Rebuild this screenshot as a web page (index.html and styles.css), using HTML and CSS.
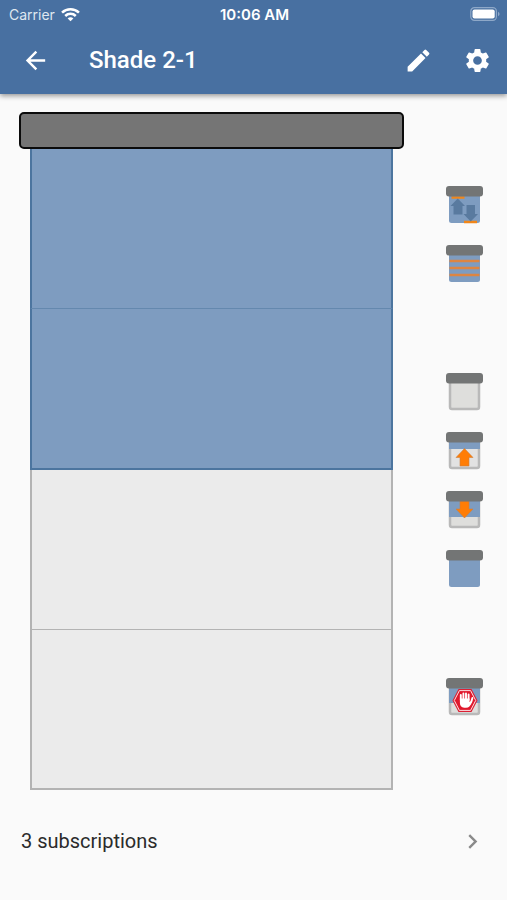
FILE: index.html
```html
<!DOCTYPE html>
<html lang="en">
<head>
<meta charset="utf-8">
<meta name="viewport" content="width=device-width, initial-scale=1">
<title>Shade 2-1</title>
<link rel="stylesheet" href="styles.css">
</head>
<body>
<header class="top">
  <div class="status">
    <div class="carrier">
      <span>Carrier</span>
      <svg width="19" height="15" viewBox="0 0 18 14" fill="none" stroke="#fff" stroke-width="2.4" aria-hidden="true">
        <path d="M1 5.2a11.5 11.5 0 0 1 16 0M4 8.4a7.2 7.2 0 0 1 10 0"/>
        <path d="M9 13.5 6.3 10.8a3.8 3.8 0 0 1 5.4 0z" fill="#fff" stroke="none"/>
      </svg>
    </div>
    <time class="clock">10:06 AM</time>
    <svg class="battery" width="30" height="14" viewBox="0 0 30 14" aria-hidden="true">
      <rect x=".8" y=".7" width="25.6" height="12.6" rx="3.6" fill="none" stroke="#8ea8c8" stroke-width="1.2"/>
      <rect x="2.5" y="2.4" width="22.2" height="9.2" rx="2" fill="#fff"/>
      <path d="M28 4.8q1.6.7 1.6 2.2T28 9.2z" fill="#8ea8c8"/>
    </svg>
  </div>
  <div class="bar">
    <button class="icon-btn" aria-label="Back">
      <svg width="29" height="29" viewBox="0 0 24 24" fill="#fff"><path d="M20 11H7.83l5.59-5.59L12 4l-8 8 8 8 1.41-1.41L7.83 13H20v-2z"/></svg>
    </button>
    <h1 class="title">Shade 2-1</h1>
    <button class="icon-btn" aria-label="Edit">
      <svg width="29" height="29" viewBox="0 0 24 24" fill="#fff"><path d="M3 17.25V21h3.75L17.81 9.94l-3.75-3.75L3 17.25zM20.71 7.04a1 1 0 0 0 0-1.41l-2.34-2.34a1 1 0 0 0-1.41 0l-1.83 1.83 3.75 3.75 1.83-1.83z"/></svg>
    </button>
    <button class="icon-btn" aria-label="Settings">
      <svg width="29" height="29" viewBox="0 0 24 24" fill="#fff"><path d="M19.14 12.94c.04-.3.06-.61.06-.94 0-.32-.02-.64-.07-.94l2.03-1.58a.49.49 0 0 0 .12-.61l-1.92-3.32a.49.49 0 0 0-.59-.22l-2.39.96c-.5-.38-1.03-.7-1.62-.94l-.36-2.54a.48.48 0 0 0-.48-.41h-3.84a.47.47 0 0 0-.47.41l-.36 2.54c-.59.24-1.13.57-1.62.94l-2.39-.96a.48.48 0 0 0-.59.22L2.74 8.87a.47.47 0 0 0 .12.61l2.03 1.58c-.05.3-.09.63-.09.94s.02.64.07.94l-2.03 1.58a.49.49 0 0 0-.12.61l1.92 3.32c.12.22.37.29.59.22l2.39-.96c.5.38 1.03.7 1.62.94l.36 2.54c.05.24.24.41.48.41h3.84c.24 0 .44-.17.47-.41l.36-2.54c.59-.24 1.13-.56 1.62-.94l2.39.96c.22.08.47 0 .59-.22l1.92-3.32a.47.47 0 0 0-.12-.61l-2.01-1.58zM12 15.6a3.6 3.6 0 1 1 0-7.2 3.6 3.6 0 0 1 0 7.2z"/></svg>
    </button>
  </div>
</header>

<main class="content">
  <section class="shade" aria-label="Shade position">
    <div class="rail"></div>
    <div class="window">
      <div class="pane covered"></div>
      <div class="pane covered last"></div>
      <div class="pane open"></div>
      <div class="pane open last"></div>
    </div>
  </section>

  <nav class="controls" aria-label="Shade controls">
    <div class="group">
      <button class="control" aria-label="Set limits">
        <svg viewBox="0 0 38 38">
          <rect x="3" y="5" width="31" height="32" rx="2.5" fill="#7e9cc0"/>
          <path d="M5.500 11.500h13M18 36h13" stroke="#f0861a" stroke-width="2.6"/>
          <path d="M11.700 12.500l7.300 7.500H16.500v8.500h-9V20H4.500z M24.700 35.500l-7.200-7.500h3v-9h8.500v9h3z" fill="#597a9f"/>
          <rect width="37" height="10.500" rx="3" fill="#737575"/>
        </svg>
      </button>
      <button class="control" aria-label="Presets">
        <svg viewBox="0 0 38 38">
          <rect x="3" y="5" width="31" height="32" rx="2.5" fill="#7e9cc0"/>
          <path d="M3.500 16h30M3.500 23h30M3.500 30h30" stroke="#dd8541" stroke-width="2.4"/>
          <rect width="37" height="10.500" rx="3" fill="#737575"/>
        </svg>
      </button>
    </div>
    <div class="group">
      <button class="control" aria-label="Open fully">
        <svg viewBox="0 0 38 38">
          <rect x="4" y="5" width="29" height="31" rx="2" fill="#dededc" stroke="#b9b9b9" stroke-width="2.5"/>
          <rect width="37" height="10.500" rx="3" fill="#737575"/>
        </svg>
      </button>
      <button class="control" aria-label="Raise">
        <svg viewBox="0 0 38 38">
          <rect x="4" y="5" width="29" height="31" rx="2" fill="#e2e2e2" stroke="#b9b9b9" stroke-width="2.5"/>
          <path d="M3 8h31v9H3z" fill="#7e9cc0"/>
          <path d="M18.500 16.500l8.500 9h-4V34h-9v-8.500h-4z" fill="#ff7d05" stroke="#c98243" stroke-width=".6"/>
          <rect width="37" height="10.500" rx="3" fill="#737575"/>
        </svg>
      </button>
      <button class="control" aria-label="Lower">
        <svg viewBox="0 0 38 38">
          <rect x="4" y="5" width="29" height="31" rx="2" fill="#dededc" stroke="#b9b9b9" stroke-width="2.5"/>
          <path d="M3 8h31v18H3z" fill="#7e9cc0"/>
          <path d="M18.500 27l-8.500-9h4v-8h9v8h4z" fill="#ff7d05" stroke="#c98243" stroke-width=".6"/>
          <rect width="37" height="10.500" rx="3" fill="#737575"/>
        </svg>
      </button>
      <button class="control" aria-label="Close fully">
        <svg viewBox="0 0 38 38">
          <rect x="3" y="5" width="31" height="32" rx="2.5" fill="#7e9cc0"/>
          <rect width="37" height="10.500" rx="3" fill="#737575"/>
        </svg>
      </button>
    </div>
    <div class="group">
      <button class="control" aria-label="Stop">
        <svg viewBox="0 0 38 38">
          <rect x="4" y="5" width="29" height="31" rx="2" fill="#dededc" stroke="#b9b9b9" stroke-width="2.5"/>
          <path d="M3 8h31v17H3z" fill="#7e9cc0"/>
          <rect width="37" height="10.500" rx="3" fill="#737575"/>
          <path d="M12.500 11h13l6 11.500-6 11.500h-13l-6-11.500z" fill="#dc2034"/>
          <path d="M13.400 12.600h11.200l5.100 9.900-5.100 9.900H13.400l-5.100-9.900z" fill="#e0182c" stroke="#fbdfe2" stroke-width="1"/>
          <path d="M14.800 22v-5M17.400 22v-6.500M20 22v-6.500M22.600 22v-5.500M25.200 24l1.200-4" fill="none" stroke="#fff" stroke-width="1.900" stroke-linecap="round"/>
          <path d="M13.900 20.500h9.600v3.500l2.900-1.500q-.8 4-3 6-1.200 1.200-3.400 1.200h-1.800q-4.300-.7-4.300-5z" fill="#fff"/>
        </svg>
      </button>
    </div>
  </nav>
</main>

<a class="subscriptions" href="#subscriptions">
  <span>3 subscriptions</span>
  <svg width="29" height="29" viewBox="0 0 24 24" fill="#8a8a8a" aria-hidden="true"><path d="M10 6 8.590 7.410 13.170 12l-4.580 4.590L10 18l6-6z"/></svg>
</a>
</body>
</html>
```

FILE: styles.css
```css
* {
  box-sizing: border-box;
}

body {
  margin: 0;
  min-height: 100vh;
  display: flex;
  flex-direction: column;
  padding-bottom: 26px;
  background: #fafafa;
  color: #2b2b2b;
  font-family: Roboto, "Liberation Sans", sans-serif;
}

button {
  padding: 0;
  border: 0;
  background: none;
  cursor: pointer;
}

svg {
  display: block;
}

.top {
  background: #4870a1;
  color: #fff;
  box-shadow: 0 2px 5px rgba(0, 0, 0, 0.4);
}

.status {
  display: grid;
  grid-template-columns: 1fr auto 1fr;
  align-items: center;
  height: 28px;
  padding: 0 7px 0 9px;
  font-family: Inter, sans-serif;
  font-size: 14px;
}

.carrier {
  display: flex;
  align-items: center;
  gap: 6px;
  color: #dfe7f0;
}

.clock {
  font-size: 15px;
  font-weight: 600;
}

.battery {
  justify-self: end;
}

.bar {
  display: flex;
  align-items: center;
  height: 66px;
  padding: 0 6px 2px 11px;
}

.icon-btn {
  display: grid;
  place-items: center;
  width: 48px;
  height: 48px;
}

.icon-btn + .icon-btn {
  margin-left: 11px;
}

.title {
  flex: 1;
  margin: 0 0 0 30px;
  font-size: 24px;
  font-weight: 500;
}

.content {
  flex: 1;
  display: flex;
  padding: 18px 23px 18px 19px;
}

.shade {
  flex: 1;
  display: flex;
  flex-direction: column;
}

.rail {
  height: 37px;
  border: 2px solid #0b0b0b;
  border-radius: 5px;
  background: #757575;
}

.window {
  flex: 1;
  display: grid;
  grid-template-rows: repeat(4, 1fr);
  min-height: 400px;
  margin: 0 11px;
}

.pane {
  border: 2px solid #b3b3b3;
  border-top: 0;
  border-bottom-width: 1px;
}

.covered {
  border-color: #4c759f;
  border-bottom-color: #6488ae;
  background: #7e9cc0;
}

.open {
  background: #ebebeb;
}

.last {
  border-bottom-width: 2px;
}

.covered.last {
  border-bottom-color: #4c759f;
}

.controls {
  display: flex;
  flex-direction: column;
  justify-content: center;
  gap: 90px;
  width: 38px;
  margin-left: 42px;
}

.group {
  display: grid;
  gap: 21px;
}

.control,
.control svg {
  width: 38px;
  height: 38px;
}

.subscriptions {
  display: flex;
  align-items: center;
  justify-content: space-between;
  height: 66px;
  padding: 0 20px 0 21px;
  color: inherit;
  font-size: 20px;
  text-decoration: none;
}
```
